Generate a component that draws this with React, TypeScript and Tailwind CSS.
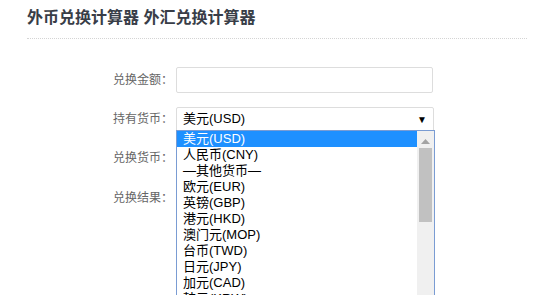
const FONT = "font-['Liberation_Sans','Noto_Sans_CJK_SC',sans-serif]";

const OPTIONS = [
  "美元(USD)",
  "人民币(CNY)",
  "—其他货币—",
  "欧元(EUR)",
  "英镑(GBP)",
  "港元(HKD)",
  "澳门元(MOP)",
  "台币(TWD)",
  "日元(JPY)",
  "加元(CAD)",
  "韩元(KRW)",
];

function Label({ text }: { text: string }) {
  return <div className="w-[173px] shrink-0 pl-[113px] text-[12px] leading-[16px] text-[#666]">{text}</div>;
}

export default function App() {
  return (
    <div className={`${FONT} relative h-[295px] w-[551px] overflow-hidden bg-white`}>
      {/* Header */}
      <div className="mx-[27px] w-[500px] border-b border-dotted border-[#d4d4d4] pt-[8px] pb-[10px]">
        <h1 className="text-[16px] leading-[20px] font-bold text-[#383d47]">外币兑换计算器 外汇兑换计算器</h1>
      </div>

      {/* Form */}
      <div className="h-[250px] border-b border-[#ddd]">
        <div className="mt-[28px] flex items-center">
          <Label text="兑换金额：" />
          <div className="ml-[3px] h-[26px] w-[257px] rounded-[2px] border border-[#ddd]" />
        </div>

        <div className="relative mt-[14px] flex items-center">
          <Label text="持有货币：" />
          <div className="ml-[3px] flex h-[24px] w-[258px] items-center justify-between rounded-t-[2px] border border-[#ddd] pr-[6px] pl-[6px] text-[13px] text-black">
            <span>美元(USD)</span>
            <span className="text-[10px]">▼</span>
          </div>

          {/* open dropdown */}
          <div className="absolute top-[23px] left-[176px] z-10 flex h-[180px] w-[259px] border border-[#7a9cd3] bg-white">
            <div className="flex-1">
              {OPTIONS.map((o, i) => (
                <div
                  key={o}
                  className={`h-[16px] pl-[6px] text-[13px] leading-[16px] ${i === 0 ? "bg-[#1e90ff] text-white" : "text-black"}`}
                >
                  {o}
                </div>
              ))}
            </div>
            <div className="flex w-[17px] flex-col items-center bg-[#f0f0f0]">
              <svg width="9" height="5" viewBox="0 0 9 5" className="mt-[8px]">
                <path d="M0 5 L4.5 0 L9 5 Z" fill="#a3a3a3" />
              </svg>
              <div className="mt-[4px] h-[74px] w-[13px] bg-[#c1c1c1]" />
            </div>
          </div>
        </div>

        <div className="mt-[19px] flex items-center">
          <Label text="兑换货币：" />
        </div>
        <div className="mt-[24px] flex items-center">
          <Label text="兑换结果：" />
        </div>
      </div>
    </div>
  );
}
